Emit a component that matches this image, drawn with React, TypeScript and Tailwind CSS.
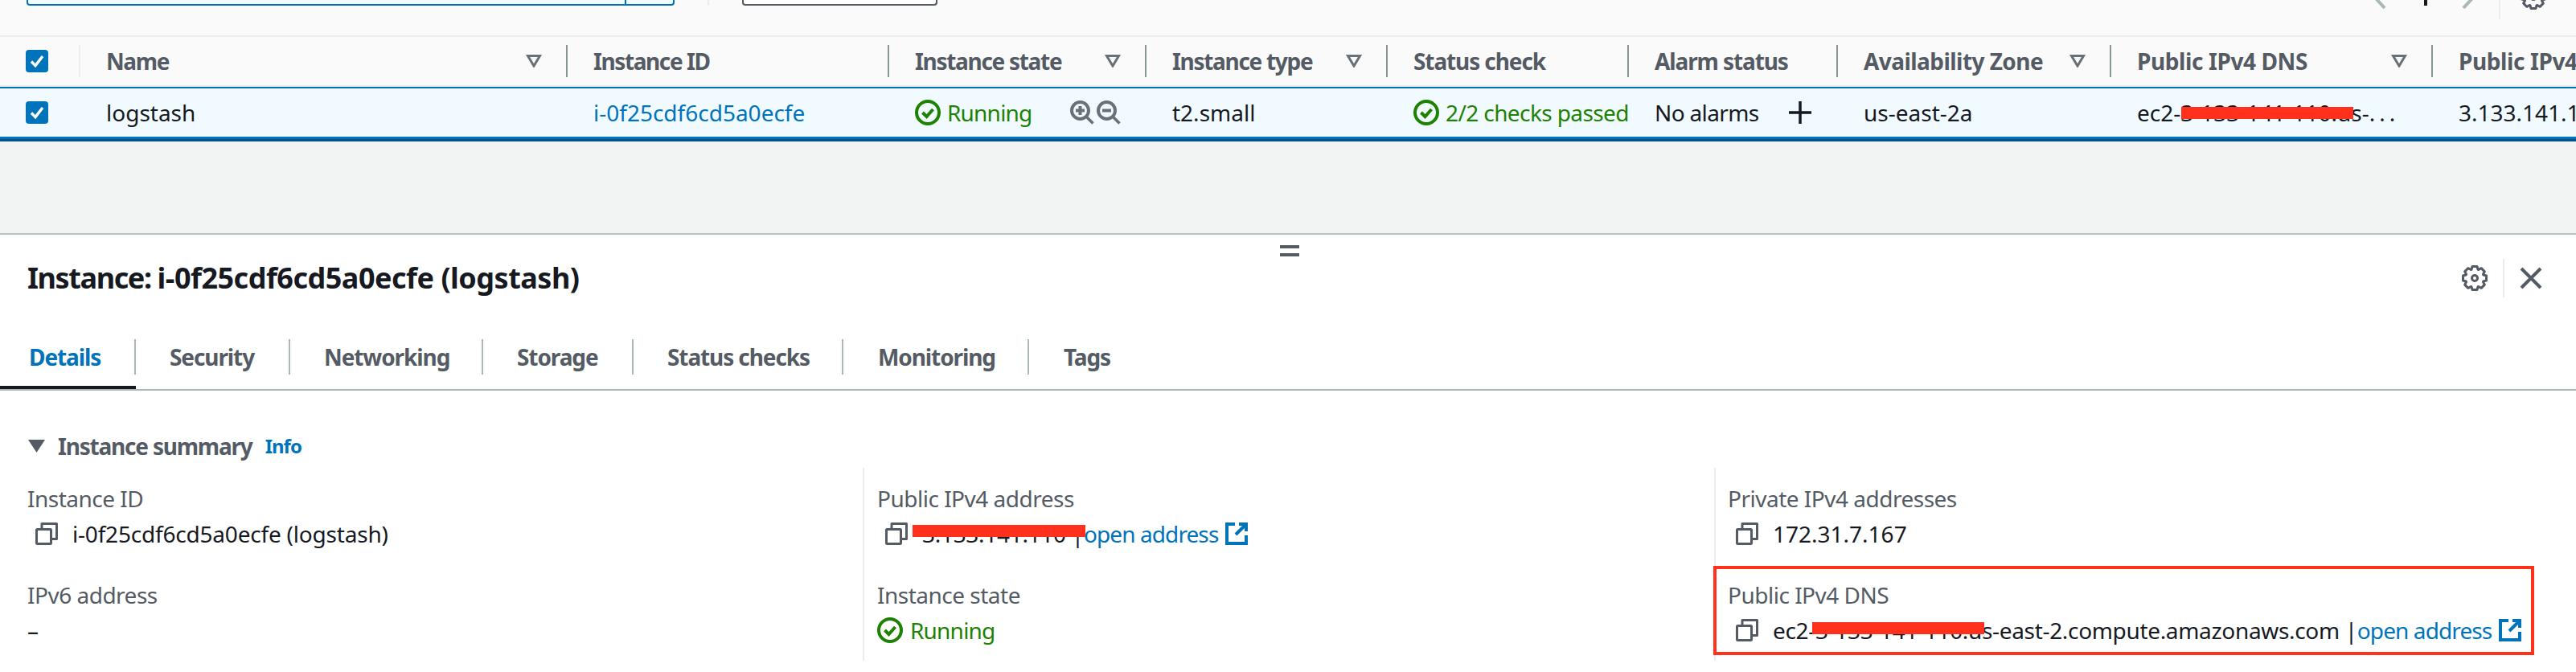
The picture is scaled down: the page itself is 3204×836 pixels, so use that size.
import React from 'react'

const gridCols = 'grid grid-cols-[100px_606px_400px_320px_300px_300px_260px_340px_400px_1fr]'

const headers = [
  { label: 'Name', sort: true, track: 'tracking-[-1.4px]' },
  { label: 'Instance ID', sort: false, track: 'tracking-[-1.4px]' },
  { label: 'Instance state', sort: true, track: 'tracking-[-1.3px]' },
  { label: 'Instance type', sort: true, track: 'tracking-[-1.3px]' },
  { label: 'Status check', sort: false, track: 'tracking-[-1.1px]' },
  { label: 'Alarm status', sort: false, track: 'tracking-[-1.1px]' },
  { label: 'Availability Zone', sort: true, track: 'tracking-[-0.55px]' },
  { label: 'Public IPv4 DNS', sort: true, track: 'tracking-[-0.4px]' },
  { label: 'Public IPv4 address', sort: false, track: 'tracking-[-0.4px]' },
]

const tabs = [
  { label: 'Details', width: 'w-[169px]', pad: 'pl-[36px]' },
  { label: 'Security', width: 'w-[192px]', pad: 'pl-[42px]' },
  { label: 'Networking', width: 'w-[240px]', pad: 'pl-[42px]' },
  { label: 'Storage', width: 'w-[187px]', pad: 'pl-[42px]' },
  { label: 'Status checks', width: 'w-[261px]', pad: 'pl-[42px]' },
  { label: 'Monitoring', width: 'w-[231px]', pad: 'pl-[43px]' },
  { label: 'Tags', width: 'w-[120px]', pad: 'pl-[43px]' },
]

// 8 tooth cog outline, centred on 16,16
function gearPath() {
  const pts: string[] = []
  for (let i = 0; i < 8; i++) {
    const a = (i * Math.PI) / 4
    const offsets: [number, number][] = [
      [11.5, -0.36],
      [14.8, -0.2],
      [14.8, 0.2],
      [11.5, 0.36],
    ]
    offsets.forEach(([r, o]) => {
      pts.push(`${(16 + r * Math.cos(a + o)).toFixed(2)} ${(16 + r * Math.sin(a + o)).toFixed(2)}`)
    })
  }
  return `M${pts.join('L')}z`
}

function Gear({ className }: { className?: string }) {
  return (
    <svg width="32" height="32" viewBox="0 0 32 32" fill="none" className={`shrink-0 ${className ?? ''}`}>
      <path d={gearPath()} stroke="#545b64" strokeWidth="3" strokeLinejoin="round" />
      <circle cx="16" cy="16" r="3.5" stroke="#545b64" strokeWidth="3" />
    </svg>
  )
}

function Checkbox() {
  return (
    <span className="flex h-[28px] w-[28px] items-center justify-center rounded-[4px] bg-[#0073bb]">
      <svg width="20" height="20" viewBox="0 0 20 20" fill="none">
        <path d="M3 10.5l5 5L17 4" stroke="white" strokeWidth="3.5" />
      </svg>
    </span>
  )
}

function SortIcon() {
  return (
    <svg width="20" height="16" viewBox="0 0 20 16" fill="none" className="shrink-0">
      <path d="M2.5 1.5h15L10 14z" stroke="#687078" strokeWidth="3" strokeLinejoin="miter" />
    </svg>
  )
}

function StatusOk() {
  return (
    <svg width="32" height="32" viewBox="0 0 32 32" fill="none" className="shrink-0">
      <circle cx="16" cy="16" r="14" stroke="#1d8102" strokeWidth="4" />
      <path d="M9.5 16l5 5 8-9" stroke="#1d8102" strokeWidth="4" />
    </svg>
  )
}

function Zoom({ minus }: { minus?: boolean }) {
  return (
    <svg width="30" height="30" viewBox="0 0 30 30" fill="none" className="shrink-0">
      <circle cx="12.5" cy="12.5" r="10.5" stroke="#687078" strokeWidth="4" />
      <path d="M20 20l8.5 8.5" stroke="#687078" strokeWidth="3.5" />
      <path d="M7 12.5h11" stroke="#687078" strokeWidth="4" />
      {!minus && <path d="M12.5 7v11" stroke="#687078" strokeWidth="4" />}
    </svg>
  )
}

function CopyIcon() {
  return (
    <svg width="28" height="28" viewBox="0 0 28 28" fill="none" className="shrink-0">
      <path d="M8 8V1.5h18.5v19H20" stroke="#545b64" strokeWidth="3" strokeLinejoin="round" />
      <rect x="1.5" y="8.5" width="18" height="18" rx="1" stroke="#545b64" strokeWidth="3" />
    </svg>
  )
}

function ExternalIcon() {
  return (
    <svg width="28" height="28" viewBox="0 0 28 28" fill="none" className="shrink-0">
      <path d="M12 2H2v24h24V16" stroke="#0073bb" strokeWidth="4" />
      <path d="M13 15L25 3" stroke="#0073bb" strokeWidth="4" />
      <path d="M17 2h9v9" stroke="#0073bb" strokeWidth="4" />
    </svg>
  )
}

function Redaction({ className }: { className: string }) {
  return <span className={`absolute h-[15px] bg-[#ff311c] ${className}`} />
}

function HeaderCell({ label, sort, track, last }: { label: string; sort: boolean; track: string; last?: boolean }) {
  return (
    <div className="flex h-[60px] items-center py-[10px]">
      <div
        className={`flex h-[40px] w-full items-center justify-between whitespace-nowrap pl-[32px] pr-[30px] ${last ? '' : 'border-r-2 border-[#879596]'}`}
      >
        <span className={track}>{label}</span>
        {sort && <SortIcon />}
      </div>
    </div>
  )
}

function Field({ label, children }: { label: string; children: React.ReactNode }) {
  return (
    <div className="h-[120px] pt-[16px]">
      <div className="h-[44px] leading-[44px] tracking-[-0.5px] text-[#545b64]">{label}</div>
      <div className="flex h-[44px] items-center whitespace-nowrap">{children}</div>
    </div>
  )
}

function CopyValue({ children }: { children: React.ReactNode }) {
  return (
    <>
      <span className="ml-[10px] mr-[18px]">
        <CopyIcon />
      </span>
      {children}
    </>
  )
}

function OpenAddress() {
  return (
    <>
      <span className="tracking-[-0.9px] text-[#0073bb]">open address</span>
      <span className="ml-[9px]">
        <ExternalIcon />
      </span>
    </>
  )
}

export default function App() {
  return (
    <div className="h-[836px] w-[3204px] overflow-hidden bg-white text-[28px] text-[#16191f] [font-family:'Noto_Sans',sans-serif]">
      {/* toolbar, only its bottom edge is on screen */}
      <div className="flex h-[46px] items-start overflow-hidden border-b-2 border-[#eaeded] bg-[#fafafa] pl-[33px]">
        <div className="flex h-[7px] w-[806px] justify-end rounded-b-[4px] border-x-2 border-b-2 border-[#0073bb] bg-[#f1faff] pr-[58px]">
          <span className="h-full w-[2px] bg-[#0073bb]" />
        </div>
        <span className="ml-[41px] h-[7px] w-[2px] bg-[#eaeded]" />
        <div className="ml-[41px] h-[7px] w-[243px] rounded-b-[4px] border-x-2 border-b-2 border-[#545b64] bg-white" />
        <svg width="16" height="12" viewBox="0 0 16 12" fill="none" className="ml-[1787px]">
          <path d="M1 -3l12 13" stroke="#aab7b8" strokeWidth="4" />
        </svg>
        <span className="ml-[46px] h-[7px] w-[4px] bg-[#16191f]" />
        <svg width="16" height="12" viewBox="0 0 16 12" fill="none" className="ml-[43px]">
          <path d="M14 -3L2 10" stroke="#aab7b8" strokeWidth="4" />
        </svg>
        <span className="ml-[30px] h-[24px] w-[2px] bg-[#eaeded]" />
        <Gear className="-mt-[20px] ml-[25px]" />
      </div>

      {/* table header */}
      <div className={`${gridCols} h-[62px] overflow-hidden border-b-2 border-[#eaeded] bg-[#fafafa] font-bold text-[#545b64]`}>
        <div className="flex h-[60px] items-center py-[10px]">
          <div className="flex h-[40px] w-full items-center border-r-2 border-[#eaeded] pl-[32px]">
            <Checkbox />
          </div>
        </div>
        {headers.map((h, i) => (
          <HeaderCell key={h.label} label={h.label} sort={h.sort} track={h.track} last={i === headers.length - 1} />
        ))}
      </div>

      {/* selected row */}
      <div className={`${gridCols} h-[62px] items-center overflow-hidden whitespace-nowrap border-t-2 border-[#0073bb] bg-[#f1faff]`}>
        <div className="pl-[32px]">
          <Checkbox />
        </div>
        <div className="pl-[32px]">logstash</div>
        <div className="pl-[32px] text-[#0073bb]">i-0f25cdf6cd5a0ecfe</div>
        <div className="flex items-center pl-[32px] text-[#1d8102]">
          <StatusOk />
          <span className="ml-[8px] tracking-[-0.8px]">Running</span>
          <span className="ml-[48px] flex gap-[3px]">
            <Zoom />
            <Zoom minus />
          </span>
        </div>
        <div className="pl-[32px]">t2.small</div>
        <div className="flex items-center overflow-hidden pl-[32px] text-[#1d8102]">
          <StatusOk />
          <span className="ml-[8px] tracking-[-0.6px]">2/2 checks passed</span>
        </div>
        <div className="flex items-center pl-[32px]">
          <span className="tracking-[-0.65px]">No alarms</span>
          <svg width="30" height="30" viewBox="0 0 30 30" fill="none" className="ml-[37px]">
            <path d="M15 1v28M1 15h28" stroke="#16191f" strokeWidth="3.5" />
          </svg>
        </div>
        <div className="pl-[32px]">us-east-2a</div>
        <div className="relative pl-[32px]">
          ec2-3-133-141-110.us-<span className="tracking-[5px]">...</span>
          <Redaction className="left-[87px] top-[14px] w-[214px]" />
        </div>
        <div className="pl-[32px]">3.133.141.110</div>
      </div>
      <div className="h-[6px] border-t-[3px] border-[#0073bb] bg-[#00508a]" />

      {/* split area */}
      <div className="h-[116px] border-b-2 border-[#b8c2c3] bg-[#f2f3f3]" />

      {/* details panel */}
      <div className="relative">
        <div className="absolute left-[1592px] top-[13px] flex w-[24px] flex-col gap-[6px]">
          <span className="h-[4px] bg-[#545b64]" />
          <span className="h-[4px] bg-[#545b64]" />
        </div>

        <div className="flex h-[108px] items-center justify-between">
          <h2 className="pl-[34px] text-[36px] font-bold tracking-[-0.5px]">
            <span className="tracking-[-1.4px]">Instance: </span>i-0f25cdf6cd5a0ecfe (logstash)
          </h2>
          <div className="flex h-[48px] items-center pr-[42px]">
            <Gear />
            <span className="ml-[19px] h-[48px] w-[2px] bg-[#eaeded]" />
            <svg width="28" height="28" viewBox="0 0 28 28" fill="none" className="ml-[19px]">
              <path d="M2 2l24 24M26 2L2 26" stroke="#545b64" strokeWidth="4" />
            </svg>
          </div>
        </div>

        <div className="flex border-b-2 border-[#aab7b8] font-bold tracking-[-1.1px] text-[#545b64]">
          {tabs.map((t, i) => (
            <div
              key={t.label}
              className={`${t.width} pt-[22px] ${i === 0 ? 'border-b-4 border-[#16191f] pb-[14px]' : 'pb-[18px]'}`}
            >
              <div
                className={`flex h-[44px] items-center ${t.pad} ${i === 0 ? 'text-[#0073bb]' : ''} ${i < tabs.length - 1 ? 'border-r-2 border-[#aab7b8]' : ''}`}
              >
                {t.label}
              </div>
            </div>
          ))}
        </div>

        <div className="mb-[8px] mt-[50px] flex h-[38px] items-center pl-[35px] font-bold text-[#545b64]">
          <svg width="21" height="16" viewBox="0 0 21 16" fill="none">
            <path d="M0 0h21L10.5 16z" fill="#545b64" />
          </svg>
          <span className="ml-[16px] tracking-[-1.2px]">Instance summary</span>
          <span className="ml-[16px] text-[24px] tracking-[-1px] text-[#0073bb]">Info</span>
        </div>

        <div className="grid grid-cols-[1073px_1059px_1fr]">
          <div className="pl-[34px]">
            <Field label="Instance ID">
              <CopyValue>
                <span className="tracking-[-0.2px]">i-0f25cdf6cd5a0ecfe (logstash)</span>
              </CopyValue>
            </Field>
            <Field label="IPv6 address">–</Field>
          </div>
          <div className="border-l-2 border-[#eaeded] pl-[16px]">
            <Field label="Public IPv4 address">
              <CopyValue>
                <span className="relative tracking-[-0.3px]">
                  3.133.141.110 |
                  <Redaction className="-left-[12px] top-[10px] w-[215px]" />
                </span>
                <OpenAddress />
              </CopyValue>
            </Field>
            <Field label="Instance state">
              <span className="flex items-center text-[#1d8102]">
                <StatusOk />
                <span className="ml-[9px] tracking-[-0.8px]">Running</span>
              </span>
            </Field>
          </div>
          <div className="border-l-2 border-[#eaeded] pl-[15px]">
            <Field label="Private IPv4 addresses">
              <CopyValue>172.31.7.167</CopyValue>
            </Field>
            <Field label="Public IPv4 DNS">
              <CopyValue>
                <span className="relative tracking-[-0.33px]">
                  ec2-3-133-141-110.us-east-2.compute.amazonaws.com |
                  <Redaction className="left-[49px] top-[11px] w-[214px]" />
                </span>
                <OpenAddress />
              </CopyValue>
            </Field>
          </div>
        </div>

        {/* red annotation box drawn on top of the screenshot */}
        <div className="absolute left-[2131px] top-[412px] h-[111px] w-[1021px] border-4 border-[#ff311c]" />
      </div>
    </div>
  )
}
